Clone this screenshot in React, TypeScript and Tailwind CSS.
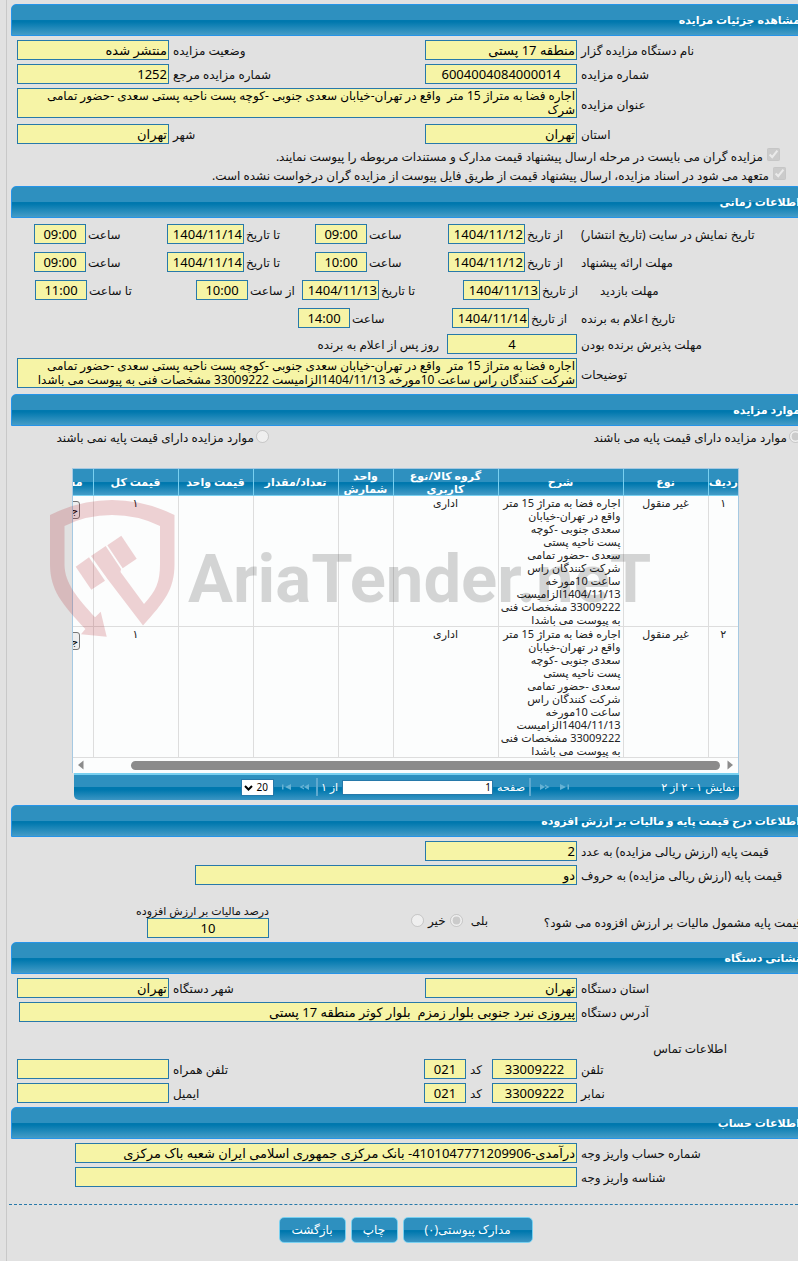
import { useId } from 'react';
import type { ReactNode } from 'react';

const ADDRESS_TEXT =
  'اجاره فضا به متراژ 15 متر  واقع در تهران-خیابان سعدی جنوبی -کوچه پست ناحیه پستی سعدی -حضور تمامی';
const FULL_TEXT =
  ADDRESS_TEXT + ' شرکت کنندگان راس ساعت 10مورخه 1404/11/13الزامیست 33009222 مشخصات فنی به پیوست می باشدا';

const ITEM_LINES = [
  'اجاره فضا به متراژ 15 متر',
  'واقع در تهران-خیابان',
  'سعدی جنوبی -کوچه',
  'پست ناحیه پستی',
  'سعدی -حضور تمامی',
  'شرکت کنندگان راس',
  'ساعت 10مورخه',
  '1404/11/13الزامیست',
  '33009222 مشخصات فنی',
  'به پیوست می باشدا',
];

const BOX = 'block h-5 shrink-0 border border-[#2779aa] bg-[#f6f4a6] px-px text-[13px] leading-[18px] text-black outline-none';

type BoxProps = { id?: string; value: string; className: string };

function Box({ id, value, className }: BoxProps) {
  return <input id={id} type="text" readOnly defaultValue={value} className={`${BOX} ${className}`} />;
}

type FieldProps = { label: string; value: string; labelClass: string; boxClass: string };

function Field({ label, value, labelClass, boxClass }: FieldProps) {
  const id = useId();
  return (
    <>
      <label htmlFor={id} className={`pt-1 pl-1 text-left whitespace-nowrap ${labelClass}`}>
        {label}
      </label>
      <Box id={id} value={value} className={boxClass} />
    </>
  );
}

type SegmentProps = { label: string; value: string; width: string; boxClass: string };

function Segment({ label, value, width, boxClass }: SegmentProps) {
  const id = useId();
  return (
    <div className={`flex shrink-0 justify-end gap-0.5 ${width}`}>
      <label htmlFor={id} className="pt-1 whitespace-nowrap">
        {label}
      </label>
      <Box id={id} value={value} className={boxClass} />
    </div>
  );
}

function TextAreaField({ label, value }: { label: string; value: string }) {
  const id = useId();
  return (
    <div className="flex items-center">
      <label htmlFor={id} className="w-[221px] shrink-0 pt-1 pl-1 text-left">
        {label}
      </label>
      <textarea
        id={id}
        readOnly
        defaultValue={value}
        className="block h-[30px] min-w-0 flex-1 resize-none overflow-hidden border border-[#2779aa] bg-[#f6f4a6] px-px text-[12px] leading-[14px] text-black outline-none"
      />
    </div>
  );
}

function SectionTitle({ children }: { children: ReactNode }) {
  return (
    <h2 className="-mr-1 ml-1 h-8 rounded-t-[5px] border border-[#2694e8] bg-[linear-gradient(#2e90bf_0,#2e90bf_50%,#0078ae_50%,#0078ae_56%,#459cc7_100%)] pr-px text-[11px] leading-[30px] font-bold text-white">
      {children}
    </h2>
  );
}

const HALF = 'w-[152px]';
const MAIN = 'w-[221px] shrink-0';
const DATE = 'w-[77px]';
const TIME = 'w-[52px] text-center';

const HEADERS = [
  ['ردیف', 'w-[30px] text-center'],
  ['نوع', 'w-[85px] text-center'],
  ['شرح', 'w-[125px] text-center'],
  ['گروه کالا/نوع کاربری', 'w-[105px] text-center'],
  ['واحد شمارش', 'w-[55px] text-center'],
  ['تعداد/مقدار', 'w-[85px] text-center'],
  ['قیمت واحد', 'w-[75px] text-center'],
  ['قیمت کل', 'w-[85px] text-center'],
  ['مستندات', 'w-[75px] pr-2.5 text-right'],
];

function ItemsTable() {
  return (
    <div className="relative mt-[22px] mr-[59px] ml-[65px]">
      <div className="overflow-hidden border border-b-0 border-[#a6c9e2] bg-[#fcfdfd]">
        <table className="w-[720px] table-fixed border-collapse text-[11px] leading-[13px] text-[#222]">
          <thead>
            <tr className="h-[26px] bg-[linear-gradient(#2e90bf_0,#2e90bf_50%,#0078ae_50%,#0078ae_56%,#459cc7_100%)] text-white">
              {HEADERS.map(([name, width]) => (
                <th key={name} className={`border-b border-l border-[#79d0f0] py-0 font-bold ${width}`}>
                  <div className="-my-px max-h-[26px] overflow-hidden">{name}</div>
                </th>
              ))}
            </tr>
          </thead>
          <tbody>
            {['۱', '۲'].map((row) => (
              <tr key={row} className="h-[131px] align-top [&>td]:border-b [&>td]:border-l [&>td]:border-[#dddddd] [&>td]:p-0 [&>td]:text-center">
                <td>{row}</td>
                <td>غیر منقول</td>
                <td>
                  <div className="px-0.5 text-right whitespace-nowrap">
                    {ITEM_LINES.map((line) => (
                      <div key={line}>{line}</div>
                    ))}
                  </div>
                </td>
                <td>اداری</td>
                <td></td>
                <td></td>
                <td></td>
                <td>۱</td>
                <td>
                  <button
                    type="button"
                    className="mt-[5px] mr-[13px] block h-[18px] w-[36px] rounded-[3px] border border-[#767676] bg-[#efefef] text-[11px] leading-4 text-black"
                  >
                    جزئیات
                  </button>
                </td>
              </tr>
            ))}
          </tbody>
        </table>
        <div className="flex h-[15px] items-center gap-1.5 px-[5px]">
          <svg width="6" height="10" viewBox="0 0 6 10" className="ml-px shrink-0" aria-hidden="true">
            <path d="M0.5 0.5v9L6 5z" fill="#8b8b8b" />
          </svg>
          <div className="ml-[41px] h-[9px] flex-1 rounded-full bg-[#8b8b8b]" />
          <svg width="6" height="10" viewBox="0 0 6 10" className="shrink-0" aria-hidden="true">
            <path d="M5.5 0.5v9L0 5z" fill="#8b8b8b" />
          </svg>
        </div>
      </div>
      <Pager />
      <Watermark />
    </div>
  );
}

function PagerArrow({ label, d }: { label: string; d: string }) {
  return (
    <button type="button" aria-label={label} className="shrink-0">
      <svg width="12" height="8" viewBox="0 0 12 8" className="block" aria-hidden="true">
        <path d={d} fill="#66b2d4" />
      </svg>
    </button>
  );
}

function Pager() {
  return (
    <div className="ml-0.5 flex h-[27px] items-center rounded-b-[5px] border-t-2 border-[#79d0f0] bg-[linear-gradient(#2e90bf_0,#2e90bf_50%,#0078ae_50%,#0078ae_60%,#3b95c3_100%)] pr-1 text-[11px] text-white">
      <span className="w-[164px] whitespace-nowrap">نمایش ۱ - ۲ از ۲</span>
      <div className="flex items-center gap-2">
        <PagerArrow label="صفحه اول" d="M1 1v6l6-3zM8.500 1.500h1.500v5h-1.500z" />
        <PagerArrow label="صفحه قبل" d="M1 1v6l5-3zM6 1.500l4.500 2.500-4.500 2.500v-1.500l2-1-2-1z" />
        <span className="h-[18px] w-0.5 bg-[#5fa9cf]" />
      </div>
      <label className="mr-1 flex items-center gap-1">
        صفحه
        <input
          type="text"
          defaultValue="1"
          className="h-[15px] w-[151px] border border-[#2779aa] bg-white px-px text-[10px] leading-[13px] text-black"
        />
      </label>
      <span className="mr-1 whitespace-nowrap">از ۱</span>
      <div className="mr-[3px] flex items-center gap-1.5">
        <span className="h-[18px] w-0.5 bg-[#5fa9cf]" />
        <PagerArrow label="صفحه بعد" d="M11 1v6l-5-3zM6 1.500l-4.500 2.500 4.500 2.500v-1.500l-2-1 2-1z" />
        <PagerArrow label="صفحه آخر" d="M11 1v6l-6-3zM2 1.500h1.500v5h-1.500z" />
      </div>
      <div className="relative mr-1.5">
        <select
          aria-label="تعداد در صفحه"
          defaultValue="20"
          className="block h-[17px] w-[33px] appearance-none border border-[#2779aa] bg-white pr-[5px] text-[10px] leading-[15px] text-black"
        >
          <option>20</option>
          <option>50</option>
        </select>
        <svg width="9" height="6" viewBox="0 0 9 6" className="pointer-events-none absolute top-[6px] left-[3px]" aria-hidden="true">
          <path d="M1 1l3.500 3.500L8 1" fill="none" stroke="#000" strokeWidth="2" />
        </svg>
      </div>
    </div>
  );
}

function Watermark() {
  return (
    <svg
      width="610"
      height="150"
      viewBox="50 495 610 150"
      direction="ltr"
      className="pointer-events-none absolute top-[27px] -left-[22px]"
      aria-hidden="true"
    >
      <g fill="#b0141e" fillOpacity="0.19">
        <path d="M50 515Q80 500 112 500T174.500 515V564C174.500 590 164 602 143 625.500L107.500 579L91 556L105.700 546L121 569L120.500 572L144 604C156 591 160 582 160 564V526Q138 515 112 515T64.500 526V564C64.500 584 78 598 95 617.300L100.700 611.700L106.700 636.700L81 634.300L85.300 629C62 604 50 590 50 564Z" />
        <path d="M75.700 566.700L89 557.300L105 580.700L91.300 589.700Z" />
        <path d="M107.300 545.300L121.300 535.700L136.700 558.700L122.700 568.300Z" />
      </g>
      <text
        x="188"
        y="602"
        fill="#000"
        fillOpacity="0.16"
        fontWeight="bold"
        className="font-['Roboto','Liberation_Sans',sans-serif] text-[67px]"
      >
        AriaTender.neT
      </text>
    </svg>
  );
}

const BUTTON =
  'h-[26px] rounded-[5px] border border-[#79d0f0] bg-[linear-gradient(#2e90bf_0,#2e90bf_50%,#0078ae_50%,#0078ae_56%,#3b95c3_100%)] text-[12px] text-white';

export default function App() {
  return (
    <div
      dir="rtl"
      className="min-h-screen overflow-hidden bg-[#e1e1e1] pl-1.5 font-['Noto_Sans','DejaVu_Sans',sans-serif] text-[12px] leading-[14px] text-[#111]"
    >
      <main className="min-h-screen border-l border-[#c8c8c8] pt-1">
        <SectionTitle>مشاهده جزئیات مزایده</SectionTitle>
        <section className="flex flex-col gap-1 pt-1 pl-2.5">
          <div className="flex">
            <Field label="نام دستگاه مزایده گزار" value="منطقه 17 پستی" labelClass={MAIN} boxClass={HALF} />
            <Field label="وضعیت مزایده" value="منتشر شده" labelClass="flex-1" boxClass={HALF} />
          </div>
          <div className="flex">
            <Field label="شماره مزایده" value="6004004084000014" labelClass={MAIN} boxClass="w-[152px] text-center" />
            <Field label="شماره مزایده مرجع" value="1252" labelClass="flex-1" boxClass={HALF} />
          </div>
          <TextAreaField label="عنوان مزایده" value={ADDRESS_TEXT + ' شرک'} />
          <div className="mt-0.5 flex">
            <Field label="استان" value="تهران" labelClass={MAIN} boxClass={HALF} />
            <Field label="شهر" value="تهران" labelClass="flex-1" boxClass={HALF} />
          </div>
        </section>
        <div className="flex flex-col gap-[5px] pt-1 pb-1.5">
          <label className="flex h-[14px] gap-1 pr-[18px]">
            <input type="checkbox" defaultChecked disabled className="size-[13px]" />
            <span className="pt-0.5">مزایده گران می بایست در مرحله ارسال پیشنهاد قیمت مدارک و مستندات مربوطه را پیوست نمایند.</span>
          </label>
          <label className="flex h-[13px] gap-1 pr-3">
            <input type="checkbox" defaultChecked disabled className="size-[13px]" />
            <span className="pt-0.5">
              متعهد می شود در اسناد مزایده، ارسال پیشنهاد قیمت از طریق فایل پیوست از مزایده گران درخواست نشده است.
            </span>
          </label>
        </div>

        <SectionTitle>اطلاعات زمانی</SectionTitle>
        <section className="flex flex-col gap-2 pt-1.5">
          <div className="flex">
            <span className="w-[217px] shrink-0 pt-1 text-left">تاریخ نمایش در سایت (تاریخ انتشار)</span>
            <Segment label="از تاریخ" value="1404/11/12" width="w-[133px]" boxClass={DATE} />
            <Segment label="ساعت" value="09:00" width="w-[133px]" boxClass={TIME} />
            <Segment label="تا تاریخ" value="1404/11/14" width="w-[148px]" boxClass={DATE} />
            <Segment label="ساعت" value="09:00" width="w-[133px]" boxClass={TIME} />
          </div>
          <div className="flex">
            <span className="w-[217px] shrink-0 pt-1 text-left">مهلت ارائه پیشنهاد</span>
            <Segment label="از تاریخ" value="1404/11/12" width="w-[133px]" boxClass={DATE} />
            <Segment label="ساعت" value="10:00" width="w-[133px]" boxClass={TIME} />
            <Segment label="تا تاریخ" value="1404/11/14" width="w-[148px]" boxClass={DATE} />
            <Segment label="ساعت" value="09:00" width="w-[133px]" boxClass={TIME} />
          </div>
          <div className="flex">
            <span className="w-[198px] shrink-0 pt-1 text-left">مهلت بازدید</span>
            <Segment label="از تاریخ" value="1404/11/13" width="w-[137px]" boxClass={DATE} />
            <Segment label="تا تاریخ" value="1404/11/13" width="w-[161px]" boxClass={DATE} />
            <Segment label="از ساعت" value="10:00" width="w-[106px]" boxClass={TIME} />
            <Segment label="تا ساعت" value="11:00" width="w-[161px]" boxClass={TIME} />
          </div>
          <div className="flex">
            <span className="w-[217px] shrink-0 pt-1 text-left">تاریخ اعلام به برنده</span>
            <Segment label="از تاریخ" value="1404/11/14" width="w-[129px]" boxClass={DATE} />
            <Segment label="ساعت" value="14:00" width="w-[154px]" boxClass={TIME} />
          </div>
        </section>
        <section className="flex flex-col gap-1 pt-1.5 pb-1.5 pl-2.5">
          <div className="flex">
            <Field label="مهلت پذیرش برنده بودن" value="4" labelClass={MAIN} boxClass="w-[130px] text-center" />
            <span className="pt-1 pr-2">روز پس از اعلام به برنده</span>
          </div>
          <TextAreaField label="توضیحات" value={FULL_TEXT} />
        </section>

        <SectionTitle>موارد مزایده</SectionTitle>
        <div className="-mr-1 flex h-5 pt-1">
          <label className="flex w-[533px] gap-0.5">
            <input type="radio" name="base-price" defaultChecked disabled className="size-[13px]" />
            <span className="pt-px">موارد مزایده دارای قیمت پایه می باشند</span>
          </label>
          <label className="flex gap-0.5">
            <input type="radio" name="base-price" disabled className="size-[13px]" />
            <span className="pt-px">موارد مزایده دارای قیمت پایه نمی باشند</span>
          </label>
        </div>
        <ItemsTable />

        <div className="h-[5px]" />
        <SectionTitle>اطلاعات درج قیمت پایه و مالیات بر ارزش افزوده</SectionTitle>
        <section className="flex flex-col gap-1 pt-1 pl-2.5">
          <div className="flex">
            <Field label="قیمت پایه (ارزش ریالی مزایده) به عدد" value="2" labelClass={MAIN} boxClass={HALF} />
          </div>
          <div className="flex">
            <Field label="قیمت پایه (ارزش ریالی مزایده) به حروف" value="دو" labelClass={MAIN} boxClass="w-[382px]" />
          </div>
        </section>
        <div className="flex h-[57px] items-end pb-1">
          <span className="-mr-1 w-[314px] shrink-0 pb-2 whitespace-nowrap">قیمت پایه مشمول مالیات بر ارزش افزوده می شود؟</span>
          <div className="flex w-[219px] items-center gap-1 pb-2.5">
            <label className="flex items-center gap-2">
              بلی
              <input type="radio" name="vat" defaultChecked disabled className="size-[13px]" />
            </label>
            <label className="flex items-center gap-1">
              خیر
              <input type="radio" name="vat" disabled className="size-[13px]" />
            </label>
          </div>
          <label className="block">
            <span className="block text-[11px] whitespace-nowrap">درصد مالیات بر ارزش افزوده</span>
            <Box value="10" className="w-[122px] text-center" />
          </label>
        </div>

        <SectionTitle>نشانی دستگاه</SectionTitle>
        <section className="flex flex-col gap-1 pt-1 pl-2.5">
          <div className="flex">
            <Field label="استان دستگاه" value="تهران" labelClass={MAIN} boxClass={HALF} />
            <Field label="شهر دستگاه" value="تهران" labelClass="flex-1" boxClass={HALF} />
          </div>
          <div className="flex pl-0.5">
            <Field
              label="آدرس دستگاه"
              value="پیروزی نبرد جنوبی بلوار زمزم  بلوار کوثر منطقه 17 پستی"
              labelClass={MAIN}
              boxClass="min-w-0 flex-1"
            />
          </div>
          <h3 className="pt-4 pr-[71px]">اطلاعات تماس</h3>
        </section>
        <section className="flex flex-col gap-1 pt-[3px] pb-1 pl-2.5">
          <div className="flex">
            <Field label="تلفن" value="33009222" labelClass={MAIN} boxClass="w-[85px] text-center" />
            <Field label="کد" value="021" labelClass="w-[26px] shrink-0" boxClass="w-[42px] text-center" />
            <Field label="تلفن همراه" value="" labelClass="flex-1" boxClass={HALF} />
          </div>
          <div className="flex">
            <Field label="نمابر" value="33009222" labelClass={MAIN} boxClass="w-[85px] text-center" />
            <Field label="کد" value="021" labelClass="w-[26px] shrink-0" boxClass="w-[42px] text-center" />
            <Field label="ایمیل" value="" labelClass="flex-1" boxClass={HALF} />
          </div>
        </section>

        <SectionTitle>اطلاعات حساب</SectionTitle>
        <section className="flex flex-col gap-1 pt-1">
          <div className="flex">
            <Field
              label="شماره حساب واریز وجه"
              value="درآمدی-4101047771209906- بانک مرکزی جمهوری اسلامی ایران شعبه باک مرکزی"
              labelClass={MAIN}
              boxClass="w-[502px]"
            />
          </div>
          <div className="flex">
            <Field label="شناسه واریز وجه" value="" labelClass={MAIN} boxClass="w-[502px]" />
          </div>
        </section>
        <hr className="mt-[17px] ml-0.5 border-0 border-t border-dashed border-t-[#2779aa]" />
        <div className="flex justify-center gap-[5px] pt-3 pb-4 pl-1.5">
          <button type="button" className={`${BUTTON} w-[130px]`}>مدارک پیوستی(۰)</button>
          <button type="button" className={`${BUTTON} w-[47px]`}>چاپ</button>
          <button type="button" className={`${BUTTON} w-[67px]`}>بازگشت</button>
        </div>
      </main>
    </div>
  );
}
